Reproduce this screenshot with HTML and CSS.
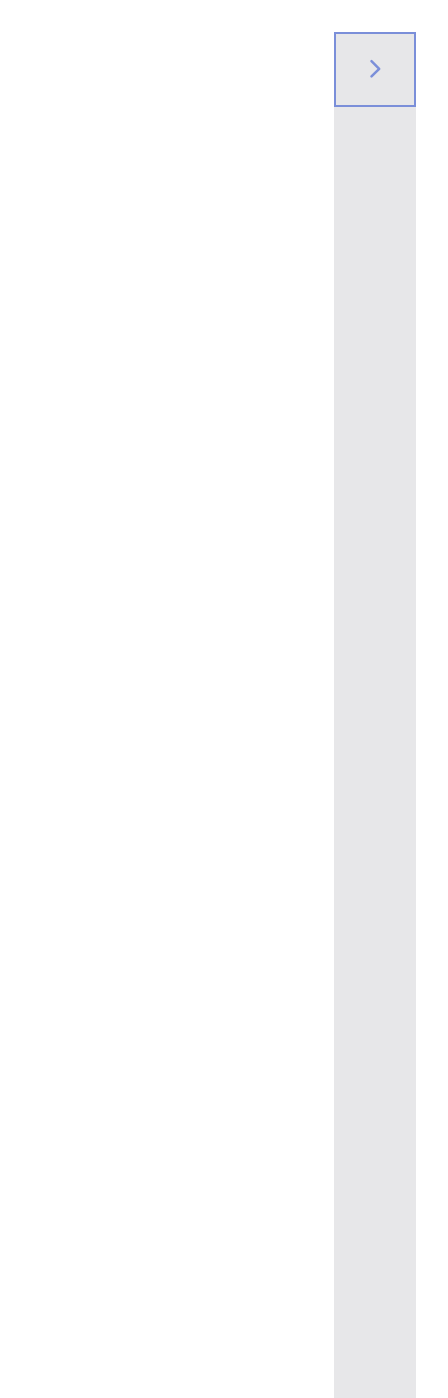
FILE: index.html
```html
<!DOCTYPE html>
<html lang="en">
<head>
<meta charset="utf-8">
<title>Sidebar</title>
<link rel="stylesheet" href="styles.css">
</head>
<body>
<div class="page">
  <main class="content"></main>
  <aside class="sidebar">
    <button class="toggle" type="button" aria-label="Expand">
      <svg class="chevron" width="14" height="20" viewBox="0 0 14 20" aria-hidden="true">
        <path d="M3.5 2.2 L11.2 9.8 L3.5 17.4" fill="none" stroke="#7b8fd9" stroke-width="2.5" stroke-linecap="round" stroke-linejoin="round"/>
      </svg>
    </button>
  </aside>
</div>
</body>
</html>
```
FILE: styles.css
```css
html, body {
  margin: 0;
  padding: 0;
  background: #ffffff;
  font-family: "Liberation Sans", Arial, sans-serif;
}
.page {
  display: flex;
  min-height: 100vh;
  box-sizing: border-box;
  padding: 32px 32px 0 0;
}
.content {
  flex: 1;
}
.sidebar {
  width: 82px;
  background: #e7e7e9;
  display: flex;
  flex-direction: column;
}
.toggle {
  display: flex;
  align-items: center;
  justify-content: center;
  height: 75px;
  width: 100%;
  margin: 0;
  padding: 0;
  box-sizing: border-box;
  background: #e7e7e9;
  border: 2px solid #7b8fd9;
  cursor: pointer;
}
.chevron {
  display: block;
  margin-top: -1px;
}
```
